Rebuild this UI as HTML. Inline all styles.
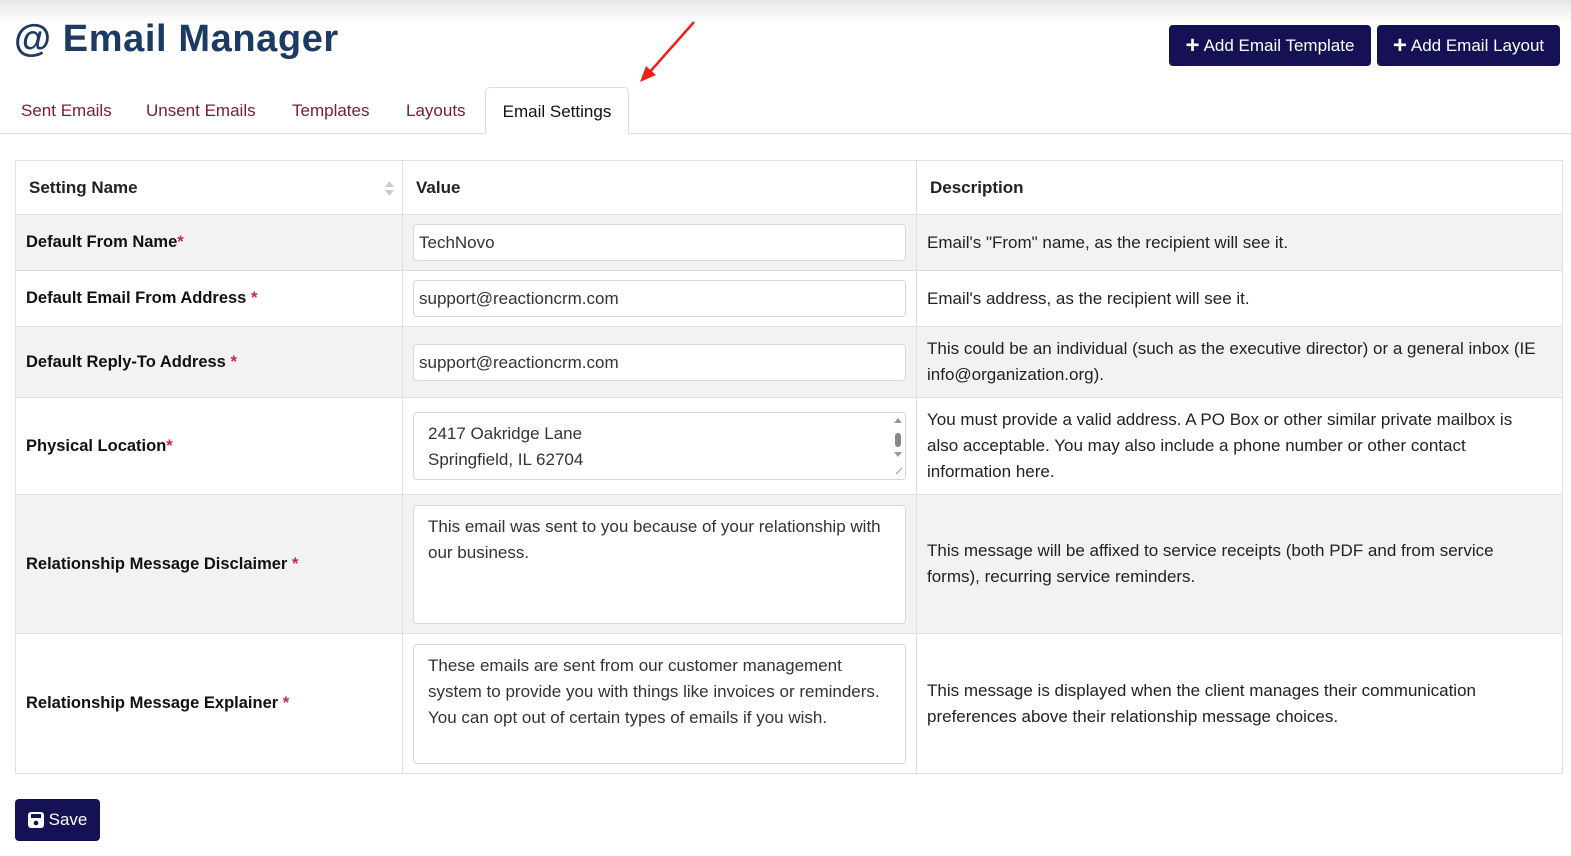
<!DOCTYPE html>
<html><head><meta charset="utf-8"><style>
*{box-sizing:border-box}
body{margin:0;width:1571px;height:856px;overflow:hidden;background:#fff;font-family:"Liberation Sans",sans-serif;color:#222;position:relative}
.shadow{position:absolute;left:0;top:0;width:1571px;height:22px;background:linear-gradient(#e6e6e6,#fff)}
h1{position:absolute;left:14px;top:18px;margin:0;font-size:38px;font-weight:bold;color:#1c3a63;letter-spacing:0.6px}
.btn{position:absolute;background:#141254;color:#fff;border-radius:4px;font-size:17px;display:flex;align-items:center;justify-content:center;white-space:nowrap}
.btn b{font-size:24px;font-weight:bold;margin-right:4px;line-height:1}
.tabs{position:absolute;left:0;top:87px;width:1571px;height:47px;border-bottom:1px solid #ddd}
.tab{position:absolute;top:0;height:47px;line-height:48px;font-size:17px;color:#7a1a3c;white-space:nowrap}
.tab.active{border:1px solid #ddd;border-bottom:1px solid #fff;border-radius:5px 5px 0 0;color:#111;background:#fff;height:47px;text-align:center}
table{position:absolute;left:15px;top:160px;width:1548px;border-collapse:collapse;font-size:17px}
td,th{border:1px solid #dfdfdf;padding:0 10px;vertical-align:middle;text-align:left}
th{font-weight:bold;padding-left:13px;position:relative}
td.l{font-weight:bold;color:#111;font-size:16.5px}
.req{color:#d0244a}
tr.g{background:#f2f2f2}
.inp{background:#fff;border:1px solid #d8d8d8;border-radius:4px;padding:0 5px;font-size:17px;color:#333}
.ta{padding:8px 14px;line-height:26px;position:relative}
.desc{line-height:26px;color:#222;padding-right:18px}
.arrow{position:absolute;left:0;top:0}
</style></head><body>
<div class="shadow"></div>
<h1>@ Email Manager</h1>
<div class="btn" style="left:1169px;top:25px;width:202px;height:41px"><b>+</b>Add Email Template</div>
<div class="btn" style="left:1377px;top:25px;width:183px;height:41px"><b>+</b>Add Email Layout</div>
<div class="tabs">
<div class="tab" style="left:21px">Sent Emails</div>
<div class="tab" style="left:146px">Unsent Emails</div>
<div class="tab" style="left:292px">Templates</div>
<div class="tab" style="left:406px">Layouts</div>
<div class="tab active" style="left:485px;width:144px">Email Settings</div>
</div>
<svg class="arrow" width="1571" height="120"><line x1="694" y1="22" x2="648" y2="74" stroke="#f0201a" stroke-width="2.5"/><polygon points="640,82 646,66 656,75" fill="#f0201a"/></svg>
<table>
<colgroup><col style="width:387px"><col style="width:514px"><col></colgroup>
<tr style="height:54px"><th>Setting Name<svg style="position:absolute;right:8px;top:20px" width="9" height="15"><polygon points="4.5,0 9,6 0,6" fill="#ccc"/><polygon points="4.5,15 9,9 0,9" fill="#ccc"/></svg></th><th>Value</th><th>Description</th></tr>
<tr class="g" style="height:56px"><td class="l">Default From Name<span class="req">*</span></td><td><div class="inp" style="height:37px;line-height:36px">TechNovo</div></td><td class="desc">Email's "From" name, as the recipient will see it.</td></tr>
<tr style="height:56px"><td class="l">Default Email From Address <span class="req">*</span></td><td><div class="inp" style="height:37px;line-height:36px">support@reactioncrm.com</div></td><td class="desc">Email's address, as the recipient will see it.</td></tr>
<tr class="g" style="height:71px"><td class="l">Default Reply-To Address <span class="req">*</span></td><td><div class="inp" style="height:37px;line-height:36px">support@reactioncrm.com</div></td><td class="desc">This could be an individual (such as the executive director) or a general inbox (IE info@organization.org).</td></tr>
<tr style="height:97px"><td class="l">Physical Location<span class="req">*</span></td><td><div class="inp ta" style="height:68px">2417 Oakridge Lane<br>Springfield, IL 62704<svg style="position:absolute;right:2px;top:4px" width="10" height="58"><polygon points="5,1 9,6 1,6" fill="#999"/><rect x="2" y="16" width="6" height="14" rx="3" fill="#888"/><polygon points="5,40 9,35 1,35" fill="#999"/><line x1="3" y1="57" x2="9" y2="51" stroke="#999"/></svg></div></td><td class="desc">You must provide a valid address. A PO Box or other similar private mailbox is also acceptable. You may also include a phone number or other contact information here.</td></tr>
<tr class="g" style="height:139px"><td class="l">Relationship Message Disclaimer <span class="req">*</span></td><td><div class="inp ta" style="height:119px">This email was sent to you because of your relationship with our business.</div></td><td class="desc">This message will be affixed to service receipts (both PDF and from service forms), recurring service reminders.</td></tr>
<tr style="height:140px"><td class="l">Relationship Message Explainer <span class="req">*</span></td><td><div class="inp ta" style="height:120px;padding-right:22px">These emails are sent from our customer management system to provide you with things like invoices or reminders. You can opt out of certain types of emails if you wish.</div></td><td class="desc">This message is displayed when the client manages their communication preferences above their relationship message choices.</td></tr>
</table>
<div class="btn" style="left:15px;top:799px;width:85px;height:42px;font-size:17px"><svg width="16" height="16" style="margin-right:5px" viewBox="0 0 16 16"><rect x="0" y="0" width="16" height="16" rx="3" fill="#fff"/><rect x="3" y="2" width="10" height="4" fill="#141254"/><circle cx="8" cy="11" r="2.3" fill="#141254"/></svg>Save</div>
</body></html>
